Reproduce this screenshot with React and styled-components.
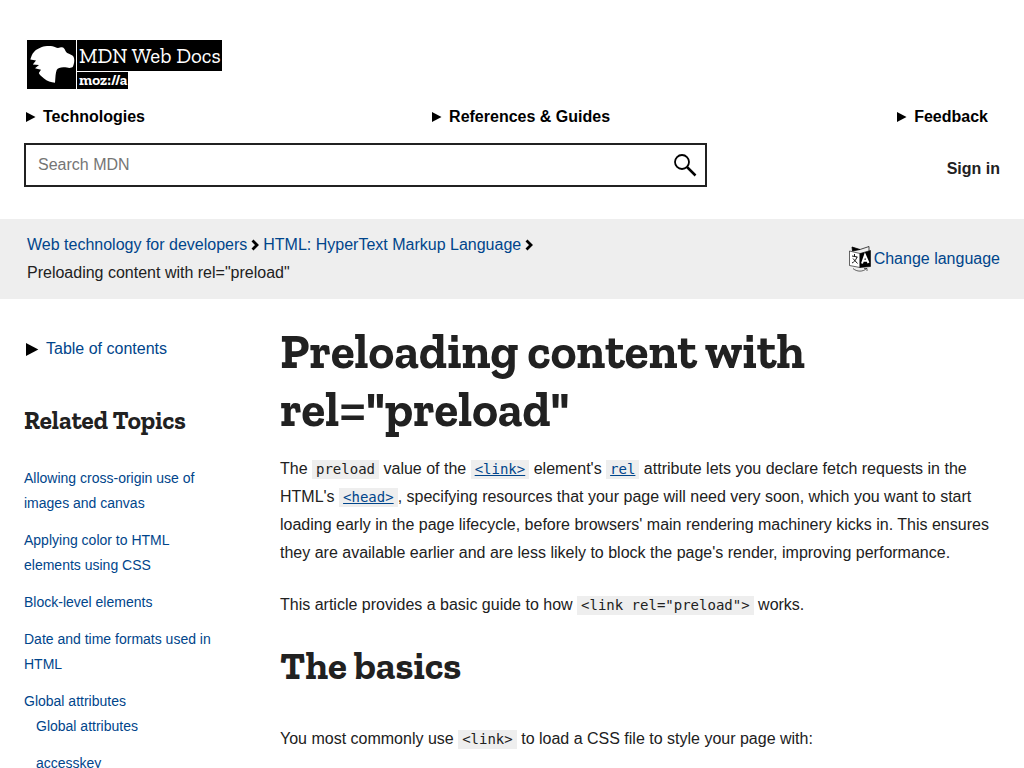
import React from "react";
import styled, { createGlobalStyle } from "styled-components";

const slab = '"Zilla Slab", "DejaVu Serif Condensed", "DejaVu Serif", serif';
const sans = 'Arial, "Liberation Sans", sans-serif';
const mono = '"DejaVu Sans Mono", monospace';
const link = "#00458b";
const ink = "#212121";

const Global = createGlobalStyle`
  *, *::before, *::after { box-sizing: border-box; }
  body { margin: 0; background: #fff; color: ${ink}; font: 16px/28px ${sans}; }
  a { color: ${link}; text-decoration: none; }
  ul, ol { list-style: none; margin: 0; padding: 0; }
  button { font: inherit; border: 0; background: none; padding: 0; cursor: pointer; }
`;

const Header = styled.header`
  padding: 40px 24px 32px;
`;
const Logo = styled.a`
  display: flex;
  gap: 1px;
  width: fit-content;
  margin-left: 3px;
  background: #fff;
  svg { display: block; width: 49px; height: 49px; background: #000; }
`;
const LogoText = styled.span`
  display: flex;
  flex-direction: column;
  align-items: flex-start;
  gap: 1px;
  font-family: ${slab};
  color: #fff;
`;
const LogoLine = styled.span`
  background: #000;
  padding: 0 1px 0 2px;
  font-size: ${(p) => (p.$small ? 15 : 21)}px;
  font-weight: ${(p) => (p.$small ? 700 : 400)};
  line-height: ${(p) => (p.$small ? 17 : 31)}px;
`;
const Nav = styled.nav`
  display: flex;
  justify-content: space-between;
  margin-top: 14px;
`;
const Marker = styled.svg`
  flex: none;
  width: ${(p) => p.$size}px;
  height: ${(p) => p.$size}px;
  fill: #000;
`;
const NavButton = styled.button`
  display: flex;
  align-items: center;
  gap: 7px;
  padding: 0 12px 0 2px;
  font-weight: 700;
  line-height: 28px;
  color: #000;
`;
const Tools = styled.div`
  display: flex;
  justify-content: space-between;
  align-items: center;
  margin-top: 12px;
`;
const Search = styled.form`
  display: flex;
  align-items: center;
  width: 70%;
  height: 44px;
  padding: 0 8px 0 12px;
  border: 2px solid ${ink};
  button { height: 24px; }
  svg { display: block; width: 24px; height: 24px; }
`;
const SearchInput = styled.input`
  flex: 1;
  min-width: 0;
  padding: 0;
  border: 0;
  outline: 0;
  font: inherit;
  background: transparent;
  &::placeholder { color: #757575; opacity: 1; }
`;
const SignIn = styled.a`
  && { color: ${ink}; }
  font-weight: 700;
  padding-top: 8px;
`;

const CrumbBar = styled.div`
  display: flex;
  justify-content: space-between;
  align-items: center;
  padding: 12px 24px;
  background: #eee;
`;
const Crumbs = styled.ol`
  display: flex;
  flex-wrap: wrap;
  width: 60%;
  padding-left: 3px;
  li { display: flex; align-items: center; }
  svg { width: 8px; height: 12px; margin: 0 4px; }
`;
const Language = styled.a`
  display: flex;
  align-items: center;
  gap: 2px;
  svg { width: 24px; height: 28px; }
`;

const Body = styled.div`
  display: grid;
  grid-template-columns: 200px minmax(0, 1fr);
  gap: 56px;
  padding: 24px 24px 0;
`;
const Toc = styled.button`
  display: flex;
  align-items: center;
  gap: 7px;
  margin: 12px 0 0 2px;
  color: ${link};
`;
const SideTitle = styled.h2`
  margin: 43px 0 32px;
  font: 700 25px/28px ${slab};
`;
const Topics = styled.ul`
  display: flex;
  flex-direction: column;
  gap: 12px;
  font-size: 14px;
  line-height: 25px;
  ul { padding-left: 12px; }
`;

const Title = styled.h1`
  margin: 0 0 16px;
  font: 700 49px/58px ${slab};
`;
const Heading = styled.h2`
  margin: 23px 0 35px;
  font: 700 39px/48px ${slab};
`;
const Text = styled.p`
  margin: 0 0 24px;
  & + ${Heading} { margin-top: -1px; }
`;
const Code = styled.code`
  padding: 1px 4px 2px;
  background: #eee;
  font-family: ${mono};
  font-size: 14px;
  a { text-decoration: underline; }
`;

function Triangle({ size = 10 }) {
  return (
    <Marker $size={size} viewBox="0 0 10 10" aria-hidden="true">
      <path d="M0 0 L9.5 5 L0 10 Z" />
    </Marker>
  );
}

function Chevron() {
  return (
    <svg viewBox="0 0 8 12" aria-hidden="true">
      <path d="M1.5 1.5 L6 6 L1.5 10.5" fill="none" stroke="#000" strokeWidth="2.8" />
    </svg>
  );
}

const topics = [
  { label: "Allowing cross-origin use of images and canvas" },
  { label: "Applying color to HTML elements using CSS" },
  { label: "Block-level elements" },
  { label: "Date and time formats used in HTML" },
  { label: "Global attributes", children: ["Global attributes", "accesskey"] },
];

export default function App() {
  return (
    <>
      <Global />
      <Header>
        <Logo href="#home" aria-label="MDN Web Docs">
          <svg viewBox="0 0 49 49" aria-hidden="true">
            <path
              fill="#fff"
              d="M3.300 19.500C4.500 16 5 14 7 12C9 9.500 14 7 18 6.300C21 6 23 6 25.500 6.300C28 6.800 29 7.800 31 8L34 7.300C37 7 37.500 9 38.500 11C39.500 12.500 40 13 42 13.800C45 15 46.500 16 47 18C47.700 21 47 24 46 26.500C45 28 42 28.300 40 27.500C36 26.800 31 27 29.700 30C28.500 33 28.500 37 28 42.700C24 42.500 20 41 17 38.500C14 36 12.500 35 11.800 33L14 29.800L8 28.300L12 25L5.800 24.500L9 20.500Z"
            />
          </svg>
          <LogoText>
            <LogoLine>MDN Web Docs</LogoLine>
            <LogoLine $small>moz://a</LogoLine>
          </LogoText>
        </Logo>
        <Nav>
          {["Technologies", "References & Guides", "Feedback"].map((t) => (
            <NavButton key={t} type="button"><Triangle />{t}</NavButton>
          ))}
        </Nav>
        <Tools>
          <Search role="search">
            <SearchInput type="text" placeholder="Search MDN" aria-label="Search MDN" />
            <button type="button" aria-label="Search">
              <svg viewBox="0 0 24 24" fill="none" stroke="#000" aria-hidden="true">
                <circle cx="9" cy="9" r="7" strokeWidth="1.8" />
                <path d="M14 14 L22.500 22.500" strokeWidth="2.5" />
              </svg>
            </button>
          </Search>
          <SignIn href="#signin">Sign in</SignIn>
        </Tools>
      </Header>
      <CrumbBar>
        <Crumbs>
          <li><a href="#web">Web technology for developers</a><Chevron /></li>
          <li><a href="#html">HTML: HyperText Markup Language</a><Chevron /></li>
          <li>Preloading content with rel="preload"</li>
        </Crumbs>
        <Language href="#language">
          <svg viewBox="0 0 24 28" fill="none" stroke="#000" aria-hidden="true">
            <path d="M1.500 6 L12 8.500 V22.500 L1.500 20.500 Z" fill="#fff" strokeWidth="0.6" />
            <path d="M12 8.500 L22.500 5.500 V21.500 L12 22.500 Z" fill="#000" strokeWidth="0.6" />
            <path d="M4 2 L12 4.500 L4.500 6 Z" fill="#000" strokeWidth="0.8" />
            <path d="M12 4.500 L21 1.500 V6" strokeWidth="0.7" />
            <path d="M4 11 L9.500 12 M6.500 9 V11 M9 12 C8 15 6 17 4 18 M5 13.500 L9.500 18.500" strokeWidth="0.9" />
            <path d="M14 18.500 L17 10 L20.500 18 M15 15.800 L19.500 15.500" stroke="#fff" strokeWidth="2" />
            <path d="M5 23.500 C9 27 15 27 18.500 23.500 M16 23.500 H19 V26" strokeWidth="0.6" />
          </svg>
          Change language
        </Language>
      </CrumbBar>
      <Body>
        <aside>
          <Toc type="button"><Triangle size={13} />Table of contents</Toc>
          <SideTitle>Related Topics</SideTitle>
          <Topics>
            {topics.map((t) => (
              <li key={t.label}>
                <a href="#topic">{t.label}</a>
                {t.children && (
                  <Topics>
                    {t.children.map((c) => <li key={c}><a href="#topic">{c}</a></li>)}
                  </Topics>
                )}
              </li>
            ))}
          </Topics>
        </aside>
        <main>
          <Title>Preloading content with rel="preload"</Title>
          <Text>
            The <Code>preload</Code> value of the <Code><a href="#link">&lt;link&gt;</a></Code> element's{" "}
            <Code><a href="#rel">rel</a></Code> attribute lets you declare fetch requests in the HTML's{" "}
            <Code><a href="#head">&lt;head&gt;</a></Code>, specifying resources that your page will need very soon,
            which you want to start loading early in the page lifecycle, before browsers' main rendering machinery
            kicks in. This ensures they are available earlier and are less likely to block the page's render,
            improving performance.
          </Text>
          <Text>
            This article provides a basic guide to how <Code>&lt;link rel="preload"&gt;</Code> works.
          </Text>
          <Heading>The basics</Heading>
          <Text>
            You most commonly use <Code>&lt;link&gt;</Code> to load a CSS file to style your page with:
          </Text>
        </main>
      </Body>
    </>
  );
}
